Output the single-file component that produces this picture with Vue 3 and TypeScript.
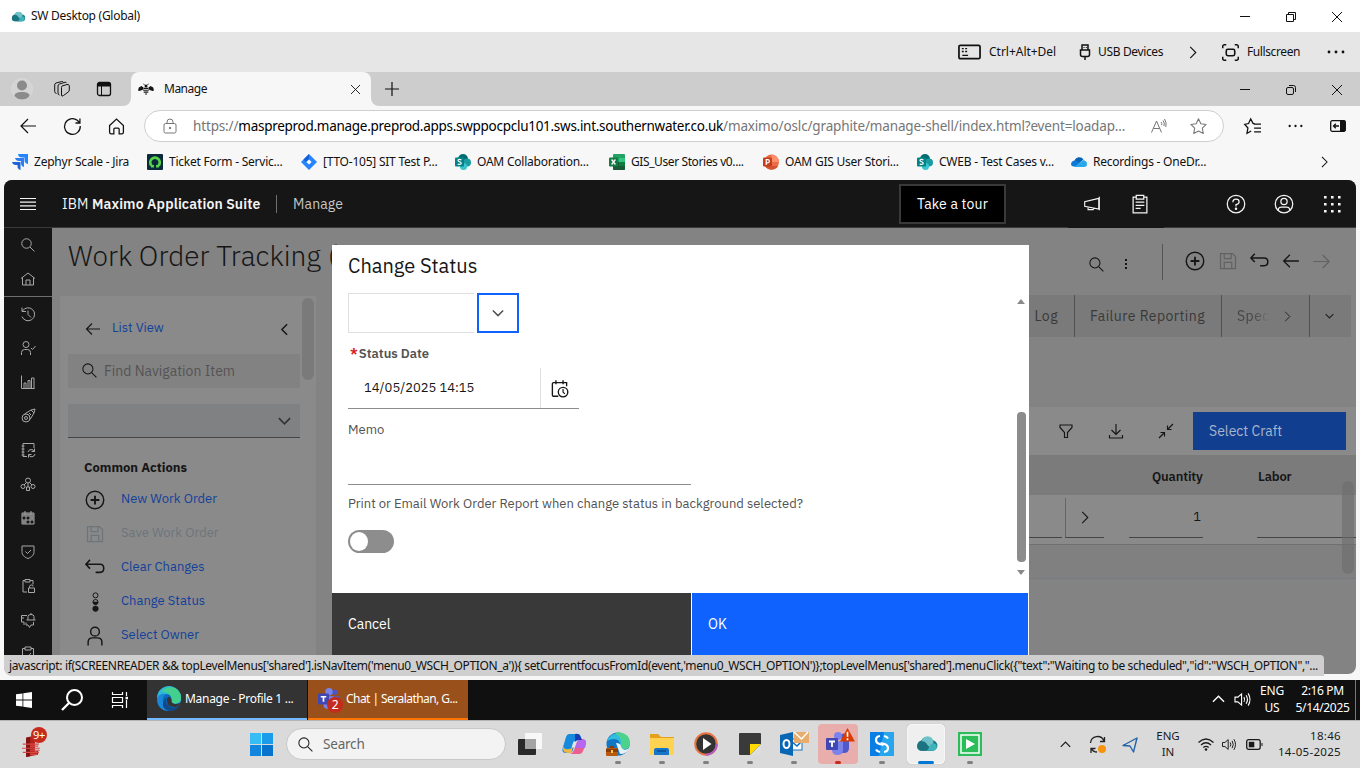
<script setup lang="ts">
import { h } from 'vue'

const art: Record<string, [string, string]> = {
  cloud: ['0 0 20 16', '<path d="M6 15a5 5 0 0 1-1-9.8A6 6 0 0 1 15.8 5 5 5 0 0 1 15 15z" fill="#1c7c86"/><circle cx="11" cy="6.500" r="5.500" fill="#6fc3c8"/><path d="M1 11a5 5 0 0 1 9-3c1.500 3 4 4.500 8 4.500-1 2-2.500 2.500-4 2.500H5a4 4 0 0 1-4-4" fill="#1c7480"/><path d="M12 12.500c1-4 5-6 7.500-3 1 3-1 5.500-4 5.500H8c2 0 3.500-1 4-2.500" fill="#3cb4ba"/>'],
  minus: ['0 0 10 10', '<path d="M0 4.500h10"/>'],
  restore: ['0 0 10 10', '<path d="M.5 2.500h7v7h-7zM2.500 2.500v-2h7v7h-2"/>'],
  restoreRound: ['0 0 10 10', '<rect x=".5" y="2.500" width="7" height="7" rx="1.500"/><path d="M3 .5h4.500a2 2 0 0 1 2 2V7"/>'],
  close: ['0 0 10 10', '<path d="M0 0l10 10M10 0L0 10"/>'],
  plus: ['0 0 14 14', '<path d="M7 0v14M0 7h14" stroke-width="1.200"/>'],
  keyboard: ['0 0 24 16', '<rect x="1" y="1" width="22" height="14" rx="1.500" stroke-width="1.800"/><path d="M4 4.500h2M7.500 4.500h2M4 7.500h2M7.500 7.500h2M4.500 11.500h6" stroke-width="1.500"/>'],
  usb: ['0 0 12 16', '<path d="M3 6V1h6v5M1.500 6h9v4.500a2 2 0 0 1-2 2h-5a2 2 0 0 1-2-2zM6 12.500V16" stroke-width="1.500"/><path d="M4.500 3.500h1M6.800 3.500h1"/>'],
  fullscreen: ['0 0 16 16', '<path d="M.7 4V2.200A1.500 1.500 0 0 1 2.200.7H4M12 .7h1.800a1.500 1.500 0 0 1 1.500 1.500V4M15.300 12v1.800a1.500 1.500 0 0 1-1.500 1.500H12M4 15.300H2.200a1.500 1.500 0 0 1-1.500-1.500V12" stroke-width="1.400"/><rect x="4" y="5" width="8" height="6" rx="1.500" stroke-width="1.500"/>'],
  right: ['0 0 8 14', '<path d="M1 1l6 6-6 6" stroke-width="1.200"/>'],
  left: ['0 0 8 14', '<path d="M7 1L1 7l6 6" stroke-width="1.700"/>'],
  down: ['0 0 14 8', '<path d="M1 1l6 6 6-6" stroke-width="1.800"/>'],
  up: ['0 0 14 8', '<path d="M1 7l6-6 6 6" stroke-width="1.500"/>'],
  dots: ['0 0 18 4', '<g fill="currentColor" stroke="none"><circle cx="2" cy="2" r="1.400"/><circle cx="9" cy="2" r="1.400"/><circle cx="16" cy="2" r="1.400"/></g>'],
  person: ['0 0 22 22', '<circle cx="11" cy="11" r="10.500" fill="#d4d4d4" stroke="#dedede" stroke-width=".6"/><g fill="#8b8b8b" stroke="none"><circle cx="11" cy="7.500" r="5"/><path d="M3.500 18c0-3 3-4 7.500-4s7.500 1 7.500 4c-2 2.500-4.500 3.500-7.500 3.500S5.500 20.500 3.500 18"/></g>'],
  workspaces: ['0 0 16 16', '<path d="M8 5l5-1.500q2-.5 2.300 1.300V9q0 1.500-1.300 2.200L9.500 14.500Q7.500 16 7.500 14V6.500q0-1 .5-1.500zM5.500 14Q4 14 4 12V5q0-1.500 1.500-2L11 1.300q1-.3 1.500.4M2.500 12.500Q.7 12 .7 10.500V4q0-1.500 1.300-2L7.500.6Q9 .3 9.300 1"/>'],
  tabActions: ['0 0 16 16', '<rect x="1.500" y="1.500" width="13" height="13" rx="2" stroke-width="1.300"/><path d="M2 2h12v3H2z" fill="currentColor"/><path d="M5.500 5v9"/>'],
  bee: ['0 0 16 12', '<g fill="#161616" stroke="none"><path d="M5.500 4.500L3.500 3 .8 4.500 0 7.500l1.500.5 4-1.500zM10.500 4.500l2-1.500 2.700 1.500.8 3-1.500.5-4-1.500z"/><path d="M5.700 4.800h4.600v1.100H5.700zM5.200 6.700h5.600v1.100H5.200zM5.700 8.600h4.600v1.100H5.700zM7 10.500h2v1H7z"/><circle cx="8" cy="3" r="1.500"/></g><path d="M6.500 2L5.500.7M9.500 2l1-1.300" stroke="#161616" stroke-width=".8"/>'],
  back: ['0 0 16 16', '<path d="M16 8H.8M8 1L1 8l7 7" stroke-width="1.200"/>'],
  refresh: ['0 0 16 16', '<path d="M15.300 7.500A7.400 7.400 0 1 1 12.500 2.200L15 4.700M15 .5v4.200h-4.200" stroke-width="1.200"/>'],
  home: ['0 0 16 16', '<path d="M1.500 7L8 1l6.500 6v6.500q0 1.500-1.500 1.500h-2.500v-4.500q0-1-1-1h-3q-1 0-1 1V15H3q-1.500 0-1.500-1.500z" stroke-width="1.200"/>'],
  lock: ['0 0 14 16', '<rect x="1" y="5.500" width="12" height="9.500" rx="1.500"/><path d="M4 5.500V4a3 3 0 0 1 6 0v1.500"/><circle cx="7" cy="10" r=".8" fill="currentColor"/>'],
  readAloud: ['0 0 16 16', '<path d="M.5 14.500L5.500 3l5 11.500M2.300 10.500h6.500M10 4q1.200 1.500.7 3.200M12 2.500q2 2.500 1 5.500M13.500 1q2.500 3.500 1.300 8"/>'],
  star: ['0 0 16 16', '<path d="M8 .8l2.200 4.600 5 .7-3.600 3.500.9 5L8 12.200l-4.500 2.400.9-5L.8 6.100l5-.7z" stroke-linejoin="round"/>'],
  favourites: ['0 0 16 16', '<path d="M10 5.300L8.500 5 6.300.8 4.300 5.200.7 6l3 3.400-.9 5 4-2.200M9 5.800h7M9.500 9.500H16M9.500 13H16" stroke-width="1.200"/>'],
  panel: ['0 0 16 12', '<rect x=".7" y=".7" width="14.600" height="10.600" rx="1.500" stroke-width="1.300"/><path d="M10.500 1h4.500v10h-4.500z" fill="currentColor"/><path d="M9 6H3.500m2.300-2.300L3.500 6l2.300 2.300" stroke-width="1.300"/>'],
  jiraScale: ['0 0 16 16', '<path d="M6 0h10v10a4 4 0 0 1-3.500-4V3.500H10A4 4 0 0 1 6 0" fill="#2684ff"/><path d="M3 4h9v9a4 4 0 0 1-3-4V7H7a4 4 0 0 1-4-3" fill="#2f7df0"/><path d="M0 8h8.500v8a4 4 0 0 1-3-4v-1H4a4 4 0 0 1-4-3" fill="#1b63d6"/>'],
  ticket: ['0 0 16 16', '<rect width="16" height="16" rx="1" fill="#0a2a3c"/><path d="M4.500 11.500a4.700 4.700 0 1 1 7 0" stroke="#55d34a" stroke-width="2.800"/><path d="M4 11h3v2.500H4zM9 11h3v2.500H9z" fill="#55d34a"/>'],
  jira: ['0 0 16 16', '<path d="M8 0l8 8-8 8-8-8z" fill="#2684ff"/><path d="M8 0v5L5 8 2.500 5.500z" fill="#1260d8"/><path d="M8 5.400L10.600 8 8 10.600 5.400 8z" fill="#fff"/>'],
  sharepoint: ['0 0 16 16', '<circle cx="8" cy="5" r="5" fill="#036c70"/><circle cx="12" cy="8.500" r="4" fill="#1a9ba1"/><circle cx="8.500" cy="12.500" r="3.500" fill="#37c6d0"/><rect y="3.500" width="9" height="9" rx="1" fill="#038387"/><path d="M6.400 5.800Q3 4.800 3 6.600c0 1.500 3.200.9 3.200 2.600 0 1.600-2.500 1.300-3.500.7" stroke="#fff" stroke-width="1.200"/>'],
  excel: ['0 0 16 16', '<rect x="4" width="12" height="16" rx="1" fill="#21a366"/><path d="M4 12h12v3a1 1 0 0 1-1 1H5a1 1 0 0 1-1-1z" fill="#185c37"/><path d="M4 8h6v4H4z" fill="#185c37"/><path d="M10 4h6v4h-6z" fill="#33c481"/><path d="M10 8h6v4h-6z" fill="#107c41"/><rect y="3.500" width="9" height="9" rx="1" fill="#107c41"/><path d="M2.600 5.500l3.800 5M6.400 5.500l-3.800 5" stroke="#fff" stroke-width="1.300"/>'],
  powerpoint: ['0 0 16 16', '<circle cx="8.500" cy="8" r="7.500" fill="#ed6c47"/><path d="M8.500.5A7.500 7.500 0 0 1 16 8H8.500z" fill="#ff8f6b"/><path d="M2 12h13a7.500 7.500 0 0 1-13 0" fill="#d35230"/><rect y="3.500" width="9" height="9" rx="1" fill="#c43e1c"/><path d="M3.200 11V5.700h1.600q1.600 0 1.600 1.500T4.800 8.800H3.500" stroke="#fff" stroke-width="1.200"/>'],
  onedrive: ['0 0 16 11', '<path d="M3.500 4.500A5 5 0 0 1 12.500 3l-6 5z" fill="#0364b8"/><path d="M0 7.500Q.5 4 4 4q2 0 3.500 1.500L10 10H3Q.2 10 0 7.500" fill="#0f78d4"/><path d="M3 10.500L12.500 3.500Q16 4.500 16 7.500t-3 3z" fill="#28a8ea"/>'],
  menu: ['0 0 16 12', '<path d="M0 .5h16M0 4.200h16M0 7.800h16M0 11.500h16" stroke-width="1.200"/>'],
  cSearch: ['0 0 32 32', '<circle cx="13" cy="13" r="9.500"/><path d="M20 20l9 9"/>'],
  cHome: ['0 0 32 32', '<path d="M2 15L16 4l14 11M5 13v15h22V13M12 28V18h8v10"/>'],
  history: ['0 0 32 32', '<path d="M5 10a13 13 0 1 1-1 11M4 3v8h8M16 9v8l6 6"/>'],
  userCheck: ['0 0 32 32', '<circle cx="12" cy="9" r="6"/><path d="M3 30v-5q0-6 6-6h6q6 0 6 6v5M22 16l3 3 6-7"/>'],
  chart: ['0 0 32 32', '<path d="M3 3v26h26M8 29V18h4v11M16 29V13h4v16M23 29V8h5v21"/>'],
  rocket: ['0 0 32 32', '<circle cx="12" cy="20" r="8"/><circle cx="12" cy="20" r="3"/><path d="M9 12L22 4l8-2-2 8-8 13M22 4l6 6M18 10l4 4"/>'],
  book: ['0 0 32 32', '<path d="M28 12V3H6v26h8M3 8h6M3 14h6M3 20h6M3 26h6M16 20a7 7 0 0 1 13-1M29 13v6h-6M30 24a7 7 0 0 1-13 2M17 31v-6h6"/>'],
  nodes: ['0 0 32 32', '<circle cx="16" cy="9" r="5"/><circle cx="6" cy="21" r="4"/><circle cx="26" cy="21" r="4"/><path d="M13 22h6v7h-6zM16 14v8M13 13l-5 5M19 13l5 5"/>'],
  calendar: ['0 0 32 32', '<path d="M4 6h24v22H4zM4 12h24M10 2v7M22 2v7M4 20h24M12 12v16M20 12v16"/><path d="M21 13h6v6h-6zM5 21h6v6H5zM5 7h22v4H5z" fill="currentColor" stroke="none" opacity=".8"/>'],
  shield: ['0 0 32 32', '<path d="M4 4h24v11c0 7-4 11-12 14C8 26 4 22 4 15zM11 15l4 4 7-7"/>'],
  clipLock: ['0 0 32 32', '<path d="M14 28H6V5h4M20 5h6v8M10 3h10v5H10zM17 20h12v9H17zM19 20v-3q0-3 4-3 3 0 3 3"/>'],
  chat: ['0 0 32 32', '<path d="M14 7H3v13h5v6M3 12h5M16 16V9q0-4 6-4t6 4v7M13 16h18M12 21v5h4l3 5 3-5h5v-6M22 2v3"/>'],
  clipCheck: ['0 0 32 32', '<path d="M10 5H5v24h22V5h-5M10 2h12v6H10zM11 18l4 4 7-8"/>'],
  bullhorn: ['0 0 32 32', '<path d="M28 6L3 12v8l25 5zM9 21v5h9l2-3M29 3v24"/>'],
  clipboard: ['0 0 32 32', '<path d="M10 5H5v25h22V5h-5M10 2h12v6H10zM9 13h14M9 18h14M9 23h8"/>'],
  help: ['0 0 32 32', '<circle cx="16" cy="16" r="14"/><path d="M11 13q0-5 5-5t5 4.500Q21 16 16 17v3"/><circle cx="16" cy="23.500" r="1" fill="currentColor"/>'],
  account: ['0 0 32 32', '<circle cx="16" cy="16" r="14"/><circle cx="16" cy="12" r="5"/><path d="M7 26v-2q1-3 5-3h8q4 0 5 3v2"/>'],
  apps: ['0 0 18 18', '<g fill="currentColor" stroke="none"><path d="M1 1h2.600v2.600H1zM8 1h2.600v2.600H8zM15 1h2.600v2.600H15zM1 8h2.600v2.600H1zM8 8h2.600v2.600H8zM15 8h2.600v2.600H15zM1 15h2.600v2.600H1zM8 15h2.600v2.600H8zM15 15h2.600v2.600H15z"/></g>'],
  kebab: ['0 0 4 14', '<path d="M1 2h2v2H1zM1 6h2v2H1zM1 10h2v2H1z" fill="currentColor" stroke="none"/>'],
  add: ['0 0 32 32', '<circle cx="16" cy="16" r="14" stroke-width="2.300"/><path d="M16 9v14M9 16h14" stroke-width="3"/>'],
  save: ['0 0 32 32', '<path d="M4 4h19l5 5v19H4zM10 4v8h11V4M10 28V18h12v10"/>'],
  undo: ['0 0 32 32', '<path d="M1 10h23q6 0 6 6.500T24 23h-7M8 3l-6.500 7L8 17" stroke-width="2.500"/>'],
  cBack: ['0 0 32 32', '<path d="M30 16H3M14 5L3 16l11 11" stroke-width="2.300"/>'],
  cForward: ['0 0 32 32', '<path d="M2 16h27M18 5l11 11-11 11"/>'],
  status: ['0 0 12 36', '<g stroke-width="1.800"><circle cx="6" cy="6" r="4.500"/><circle cx="6" cy="18" r="4.500"/></g><path d="M1.500 18h9a4.500 4.500 0 0 1-9 0" fill="currentColor"/><circle cx="6" cy="30" r="5" fill="currentColor"/>'],
  owner: ['0 0 32 32', '<g stroke-width="2.300"><circle cx="16" cy="9" r="7"/><path d="M5 31v-5q0-7 7-7h8q7 0 7 7v5"/></g>'],
  dateTime: ['0 0 32 32', '<path d="M14 29H6q-2 0-2-2V8q0-2 2-2h22v6M10 2v7M22 2v7" stroke-width="2.300"/><circle cx="22" cy="22" r="8" stroke-width="2.300"/><path d="M22 17v5l3 3"/>'],
  filter: ['0 0 32 32', '<path d="M4 4h24v5l-9 10v10h-6V19L4 9z" stroke-width="2.300"/>'],
  download: ['0 0 32 32', '<path d="M16 2v21M7 14l9 9 9-9M3 24v6h26v-6" stroke-width="2.300"/>'],
  collapse: ['0 0 32 32', '<path d="M30 2L19 13M19 5v8h8M2 30l11-11M5 19h8v8" stroke-width="2.300"/>'],
  winWhite: ['0 0 16 16', '<path d="M0 2.300L6.500 1.400v6.200H0zM7.300 1.300L16 0v7.600H7.300zM0 8.400h6.500v6.200L0 13.700zM7.300 8.400H16V16l-8.700-1.300z" fill="#fff" stroke="none"/>'],
  bigSearch: ['0 0 22 22', '<circle cx="13.500" cy="8.500" r="7.500" stroke-width="2"/><path d="M8 14l-7 7" stroke-width="2.300"/>'],
  taskView: ['0 0 16 16', '<path d="M.5 0v2.500h10V0M.5 16v-2.500h10V16M.5 5.500h10v5H.500zM14.500 0v4M14.500 8v8" stroke-width="1.200"/><rect x="13.500" y="4.800" width="2.500" height="2.500" fill="currentColor" stroke="none"/>'],
  edge: ['0 0 24 24', '<circle cx="12" cy="12" r="12" fill="#0c69b8"/><path d="M0 11A12 12 0 0 1 24 11q1 5.500-5 6-5 0-4-3 1-7-6-7-5 0-9 4" fill="#2fb9d9"/><path d="M13 0Q24 1 24 11q0 5-6 5.500-4 0-3-3Q14 5 5 4.500 8 .5 13 0" fill="#43cf8e"/><path d="M0 11q3-5 9-4-4 3-3 8 1 7 7 9Q0 24 0 11" fill="#1a87d9"/><path d="M10 11q-3 6 4 9 4 1.500 8-1-3 5-10 5-7-2-6-8 1-4 4-5" fill="#104a8b"/><path d="M11 10q3 0 3 3t4 4q3 0 5-1.500-1 5-6 4.500-8-1-7-8z" fill="#343434"/>'],
  edgeWork: ['0 0 24 24', '<circle cx="12" cy="12" r="11.500" fill="#1276c4"/><path d="M1 9A12 12 0 0 1 24 11q0 6-6 6-5 0-4-4 0-6-6-6-4 0-7 2" fill="#32bce0"/><path d="M14 .5Q24 2 24 11q0 6-6 6-3 0-3-3Q17 6 9 1q2-1 5-.5" fill="#4bd38b"/><path d="M10 11q5 0 5 4 3 5 8 1-2 6-9 6z" fill="#e7f1f5"/><rect y="16" width="12" height="8" rx="1" fill="#b65a0d"/><path d="M0 17h12v3H0zM4 14h4v2H4z" fill="#8a3c05"/><path d="M5 18h2v3H5z" fill="#ffc44c"/>'],
  teams: ['0 0 24 24', '<circle cx="18" cy="4.500" r="3" fill="#4b55c8"/><circle cx="12" cy="4" r="4" fill="#7b83eb"/><path d="M14 9h9v7q0 5-5 5h-4z" fill="#5059c9"/><path d="M6 9h11v9q0 5-5.500 5T6 18z" fill="#7b83eb"/><rect y="6" width="12" height="12" rx="1" fill="#4148b4"/><path d="M3 9.500h6M6 9.500V15" stroke="#fff" stroke-width="1.800"/>'],
  speaker: ['0 0 18 16', '<path d="M1 5.500h3L8 2v12l-4-3.500H1zM10.500 5.500q1.500 2.500 0 5M12.800 3.500q3 4.500 0 9M15 1.500q4 6.500 0 13" stroke-width="1.200"/>'],
  library: ['0 0 26 30', '<path d="M5 6l11-3v20l4-1v5L5 30z" fill="#b3211e"/><path d="M5 6l5-1v24l-5 1z" fill="#7c1514"/><path d="M1 14h20M0 19h22M1 24h20M10 16.500h10M10 21.500h12M10 26.500h9" stroke="#d94a47" stroke-width="1.500"/>'],
  winBlue: ['0 0 23 23', '<path d="M0 0h11v11H0z" fill="#36bdf5"/><path d="M12 0h11v11H12z" fill="#1a9ceb"/><path d="M0 12h11v11H0z" fill="#1286df"/><path d="M12 12h11v11H12z" fill="#0873cd"/>'],
  desktops: ['0 0 24 22', '<rect x="0" y="6" width="18" height="16" rx="1" fill="#292929"/><rect x="7" y="0" width="17" height="16" rx="1" fill="#f8f8f8"/><path d="M7 6h11v10H7z" fill="#a2a5a4"/>'],
  copilot: ['0 0 24 22', '<path d="M7 1h9q2 0 2.500 2L20 7h-4q-2 0-3 3l-2 7q-1 3-4 3H4q-5 0-3-6L4 4q1-3 3-3" fill="#168bdd"/><path d="M1 13q1 4 6 3 3 0 4-4l-1 6q-1 3-4 2-6 0-5-7" fill="#f2b63c"/><path d="M17 21H8q3-1 4-4l3-8q1-3 4-3 6 0 5 5l-3 7q-1 3-4 3" fill="#ec5d91"/><path d="M13 15l2-6q1-3 4-3 6 0 5 5l-1 4z" fill="#b568ed"/><path d="M13 1q4-1 5 2l2 4h-4q-2 0-3 2z" fill="#173cb4"/><path d="M11.500 8.500h3l-2 6h-3z" fill="#e4e4e4"/>'],
  folder: ['0 0 24 22', '<path d="M0 1h8l3 3h13v17H0z" fill="#e4a11b"/><path d="M0 5h24v17H0z" fill="#ffd252"/><path d="M4 22v-5q0-2 2-2h11q2 0 2 2v5z" fill="#1475c9"/><path d="M7 18h9" stroke="#0c4d93" stroke-width="1.500"/>'],
  media: ['0 0 24 24', '<circle cx="12" cy="12" r="10.800" fill="#333" stroke="#e77543" stroke-width="2"/><path d="M12 22.800A10.800 10.800 0 0 0 22.800 12" stroke="#b65bc4" stroke-width="2"/><path d="M9 6l8.500 6L9 18z" fill="#fff"/>'],
  sticky: ['0 0 22 22', '<rect width="22" height="22" rx="1" fill="#3a3a3a"/><path d="M11 11h11L11 22z" fill="#ffd900"/><path d="M22 11v11H11z" fill="#ddd"/>'],
  outlook: ['0 0 28 24', '<rect x="11" y="7" width="11" height="11" fill="#fff" stroke="#0f72c6"/><path d="M11 9l6 5 5-5" stroke="#0f72c6" stroke-width="1.500"/><path d="M14 0h15v11H14z" fill="#e8ac6c"/><path d="M14 0l7.500 7L28 0" stroke="#fff" stroke-width="1.500"/><path d="M0 3l13-3v24L0 21z" fill="#0867b5"/><ellipse cx="6.500" cy="12" rx="3" ry="4" stroke="#fff" stroke-width="2"/>'],
  alert: ['0 0 16 15', '<path d="M8 0l8 14.500H0z" fill="#da3b01"/><path d="M8 4v5.500M8 11v2" stroke="#fff" stroke-width="1.800"/>'],
  stream: ['0 0 24 24', '<rect width="24" height="24" fill="#087ee4"/><path d="M14 0h10v24H9z" fill="#27a5ed"/><path d="M10 4Q6 4.500 6 8q0 3 3.500 4l4 1M10 20q-3-.5-4-2.500M14 4q3 .5 4 2.500M10.500 11l4 1Q18 13 18 16q0 3.500-4 4" stroke="#fff" stroke-width="2.200"/>'],
  camtasia: ['0 0 24 24', '<rect width="24" height="24" fill="#2abd5a"/><rect x="3" y="3" width="18" height="18" stroke="#fff" stroke-width="1.500"/><path d="M8 7l9 5-9 5z" fill="#fff"/>'],
  sync: ['0 0 18 18', '<path d="M1.500 7A7 7 0 0 1 15 5M15.500 1v4.500H11M8 16Q4 16 2.500 12.500M2 17v-4.500h4.500" stroke="#222" stroke-width="1.300"/><circle cx="13" cy="13" r="4" fill="#f7930c" stroke="none"/>'],
  locate: ['0 0 16 16', '<path d="M15 1L1 8.500l7 .5 3.500 6z" stroke="#2563a9" stroke-width="1.400" stroke-linejoin="round"/>'],
  wifi: ['0 0 16 13', '<path d="M.5 4.500q7.500-7 15 0M3 7q5-4.500 10 0M5.300 9.500q2.700-2.300 5.400 0" stroke-width="1.300"/><circle cx="8" cy="11.500" r="1.300" fill="currentColor" stroke="none"/>'],
  battery: ['0 0 17 11', '<rect x=".7" y=".7" width="13.500" height="9.600" rx="2" stroke-width="1.300"/><path d="M2.800 2.800h5.500v5.500H2.800z" fill="currentColor" stroke="none"/><path d="M16 4v3"/>'],
}

interface IconProps { name: string; w: number; hgt?: number }

// Line icons on a 32-unit grid need a heavier stroke to end up one pixel wide.
const Icon = (p: IconProps) => {
  const [viewBox, innerHTML] = art[p.name]
  const filled = innerHTML.includes('fill="#')
  return h('svg', {
    viewBox,
    width: p.w,
    height: p.hgt ?? p.w,
    fill: 'none',
    stroke: filled ? 'none' : 'currentColor',
    'stroke-width': viewBox.endsWith('32') ? 2 : 1,
    innerHTML,
  })
}
Icon.props = ['name', 'w', 'hgt']

const bookmarks = [
  { icon: 'jiraScale', label: 'Zephyr Scale - Jira' },
  { icon: 'ticket', label: 'Ticket Form - Servic...' },
  { icon: 'jira', label: '[TTO-105] SIT Test P...' },
  { icon: 'sharepoint', label: 'OAM Collaboration...' },
  { icon: 'excel', label: 'GIS_User Stories v0....' },
  { icon: 'powerpoint', label: 'OAM GIS User Stori...' },
  { icon: 'sharepoint', label: 'CWEB - Test Cases v...' },
  { icon: 'onedrive', label: 'Recordings - OneDr...' },
]
const railTop = ['cSearch', 'cHome']
const rail = ['history', 'userCheck', 'chart', 'rocket', 'book', 'nodes', 'calendar', 'shield', 'clipLock', 'chat', 'clipCheck']
const actions = [
  { icon: 'add', label: 'New Work Order', off: false },
  { icon: 'save', label: 'Save Work Order', off: true },
  { icon: 'undo', label: 'Clear Changes', off: false },
  { icon: 'status', label: 'Change Status', off: false },
  { icon: 'owner', label: 'Select Owner', off: false },
]
const dock = [
  { icon: 'desktops', w: 24, hgt: 22, state: '' },
  { icon: 'copilot', w: 24, hgt: 22, state: '' },
  { icon: 'edgeWork', w: 24, hgt: 24, state: 'run' },
  { icon: 'folder', w: 24, hgt: 22, state: 'run' },
  { icon: 'media', w: 24, hgt: 24, state: 'run' },
  { icon: 'sticky', w: 22, hgt: 22, state: 'run' },
  { icon: 'outlook', w: 28, hgt: 24, state: 'run' },
  { icon: 'teams', w: 24, hgt: 24, state: 'run alerting' },
  { icon: 'stream', w: 24, hgt: 24, state: 'run' },
  { icon: 'cloud', w: 21, hgt: 17, state: 'run current' },
  { icon: 'camtasia', w: 24, hgt: 24, state: 'run' },
]
const statusText = `javascript: if(SCREENREADER && topLevelMenus['shared'].isNavItem('menu0_WSCH_OPTION_a')){ setCurrentfocusFromId(event,'menu0_WSCH_OPTION')};topLevelMenus['shared'].menuClick({"text":"Waiting to be scheduled","id":"WSCH_OPTION","...`
</script>

<template>
  <div class="screen">
    <header class="titlebar">
      <Icon name="cloud" :w="14" :hgt="11" />
      <span class="win-title">SW Desktop (Global)</span>
      <div class="win-buttons">
        <span><Icon name="minus" :w="10" /></span>
        <span><Icon name="restore" :w="10" /></span>
        <span><Icon name="close" :w="10" /></span>
      </div>
    </header>

    <div class="remote-bar">
      <div class="remote-item keys"><Icon name="keyboard" :w="23" :hgt="16" /><span>Ctrl+Alt+Del</span></div>
      <div class="remote-item usb"><Icon name="usb" :w="12" :hgt="16" /><span>USB Devices</span></div>
      <div class="remote-item more"><Icon name="right" :w="8" :hgt="13" /></div>
      <div class="remote-item full"><Icon name="fullscreen" :w="17" :hgt="17" /><span>Fullscreen</span></div>
      <Icon name="dots" :w="20" :hgt="4" />
    </div>

    <div class="tabs">
      <div class="tabs-left">
        <span><Icon name="person" :w="22" /></span>
        <span><Icon name="workspaces" :w="16" /></span>
        <span class="wide"><Icon name="tabActions" :w="16" /></span>
      </div>
      <div class="tab-slot">
        <div class="tab">
          <Icon name="bee" :w="16" :hgt="12" />
          <span class="tab-name">Manage</span>
          <Icon name="close" :w="9" />
        </div>
      </div>
      <div class="tabs-right">
        <Icon name="plus" :w="14" />
        <div class="win-buttons">
          <span><Icon name="minus" :w="10" /></span>
          <span><Icon name="restoreRound" :w="10" /></span>
          <span><Icon name="close" :w="10" /></span>
        </div>
      </div>
    </div>

    <div class="address-row">
      <span class="nav-btn"><Icon name="back" :w="16" /></span>
      <span class="nav-btn"><Icon name="refresh" :w="17" /></span>
      <span class="nav-btn"><Icon name="home" :w="17" /></span>
      <div class="address">
        <Icon name="lock" :w="14" :hgt="16" />
        <span class="url">https://<b>maspreprod.manage.preprod.apps.swppocpclu101.sws.int.southernwater.co.uk</b>/maximo/oslc/graphite/manage-shell/index.html?event=loadap...</span>
        <Icon name="readAloud" :w="16" />
        <Icon class="fav" name="star" :w="17" />
      </div>
      <div class="address-tools">
        <Icon name="favourites" :w="17" />
        <Icon name="dots" :w="15" :hgt="4" />
        <Icon name="panel" :w="16" :hgt="12" />
      </div>
    </div>

    <nav class="bookmarks">
      <div v-for="(b, i) in bookmarks" :key="i" class="bookmark">
        <Icon :name="b.icon" :w="16" /><span>{{ b.label }}</span>
      </div>
      <Icon class="bm-more" name="right" :w="7" :hgt="12" />
    </nav>

    <main class="stage">
      <div class="app">
        <header class="app-bar">
          <Icon name="menu" :w="16" :hgt="12" />
          <span class="brand">IBM <b>Maximo Application Suite</b></span>
          <span class="product">Manage</span>
          <button class="tour">Take a tour</button>
          <div class="app-tools news"><span><Icon name="bullhorn" :w="18" /></span><span><Icon name="clipboard" :w="20" /></span></div>
          <div class="app-tools"><span><Icon name="help" :w="20" /></span><span><Icon name="account" :w="20" /></span><span class="apps"><Icon name="apps" :w="18" /></span></div>
        </header>
        <div class="body">
          <aside class="rail">
            <span v-for="n in railTop" :key="n"><Icon :name="n" :w="16" /></span>
            <hr />
            <span v-for="n in rail" :key="n"><Icon :name="n" :w="16" /></span>
          </aside>
          <section class="content">
            <div class="heading">
              <h1>Work Order Tracking (</h1>
              <div class="find"><Icon name="cSearch" :w="17" /><Icon name="kebab" :w="4" :hgt="14" /></div>
              <div class="record-tools">
                <Icon name="add" :w="20" /><Icon class="dim" name="save" :w="20" /><Icon name="undo" :w="19" /><Icon name="cBack" :w="18" /><Icon class="dim" name="cForward" :w="19" />
              </div>
            </div>
            <div class="columns">
              <div class="nav-panel">
                <div class="nav-main">
                  <div class="list-view"><Icon name="cBack" :w="16" /><a>List View</a><Icon name="left" :w="7" :hgt="13" /></div>
                  <div class="nav-find"><Icon name="cSearch" :w="17" /><span>Find Navigation Item</span></div>
                  <div class="nav-select"><Icon name="down" :w="13" :hgt="8" /></div>
                  <h2>Common Actions</h2>
                  <div v-for="a in actions" :key="a.label" class="action" :class="{ off: a.off }">
                    <span class="action-icon"><Icon :name="a.icon" :w="a.icon === 'status' ? 7 : 20" :hgt="20" /></span>
                    <a>{{ a.label }}</a>
                  </div>
                </div>
                <i class="thumb" />
              </div>
              <div class="record">
                <div class="record-tabs">
                  <span class="t-log">Log</span>
                  <span class="t-fail">Failure Reporting</span>
                  <span class="t-spec"><em>Spec</em><Icon name="right" :w="7" :hgt="11" /></span>
                  <span class="t-more"><Icon name="down" :w="9" :hgt="6" /></span>
                </div>
                <div class="table">
                  <div class="table-tools">
                    <Icon name="filter" :w="16" /><Icon name="download" :w="16" /><Icon name="collapse" :w="16" />
                    <button>Select Craft</button>
                  </div>
                  <div class="thead"><span class="qty">Quantity</span><span class="labor">Labor</span></div>
                  <div class="trow">
                    <i class="cell c1" /><span class="cell c2"><Icon name="right" :w="8" :hgt="13" /></span><span class="cell c3">1</span><i class="cell c4" />
                  </div>
                  <div class="tfoot" />
                  <i class="thumb" />
                </div>
              </div>
            </div>
          </section>
        </div>

        <section class="dialog">
          <h2>Change Status</h2>
          <div class="dialog-body">
            <div class="form">
              <div class="combo"><span class="combo-input" /><span class="combo-btn"><Icon name="down" :w="12" :hgt="8" /></span></div>
              <label class="required"><i>*</i>Status Date</label>
              <div class="date"><span>14/05/2025 14:15</span><span class="date-btn"><Icon name="dateTime" :w="19" /></span></div>
              <label>Memo</label>
              <div class="memo" />
              <label>Print or Email Work Order Report when change status in background selected?</label>
              <div class="toggle"><i /></div>
            </div>
            <div class="scroll"><i class="arrow-up" /><i class="bar" /><i class="arrow-down" /></div>
          </div>
          <footer><button class="cancel">Cancel</button><button class="ok">OK</button></footer>
        </section>
      </div>
      <div class="status-tip">{{ statusText }}</div>
    </main>

    <div class="taskbar">
      <div class="task-tools"><Icon name="winWhite" :w="16" /><Icon name="bigSearch" :w="22" /><Icon name="taskView" :w="16" /></div>
      <div class="task edge-task"><Icon name="edge" :w="24" /><span>Manage - Profile 1 ...</span></div>
      <div class="task teams-task"><span class="badged"><Icon name="teams" :w="22" /><b>2</b></span><span>Chat | Seralathan, G...</span></div>
      <div class="task-right">
        <Icon name="up" :w="13" :hgt="8" />
        <Icon name="speaker" :w="17" :hgt="15" />
        <div class="stack lang">ENG<br />US</div>
        <div class="stack clock">2:16 PM<br />5/14/2025</div>
      </div>
    </div>

    <div class="dock">
      <div class="widget"><Icon name="library" :w="21" :hgt="26" /><b>9+</b></div>
      <Icon class="start" name="winBlue" :w="23" />
      <div class="dock-search"><Icon name="cSearch" :w="17" /><span>Search</span></div>
      <div v-for="d in dock" :key="d.icon" class="dock-app" :class="d.state">
        <span class="dock-tile"><Icon :name="d.icon" :w="d.w" :hgt="d.hgt" /><Icon v-if="d.icon === 'teams'" class="warn" name="alert" :w="15" :hgt="14" /></span>
      </div>
      <div class="dock-right">
        <Icon class="d-up" name="up" :w="11" :hgt="7" />
        <Icon class="d-sync" name="sync" :w="18" />
        <Icon class="d-loc" name="locate" :w="16" />
        <div class="stack d-lang">ENG<br />IN</div>
        <Icon class="d-wifi" name="wifi" :w="16" :hgt="13" />
        <Icon class="d-vol" name="speaker" :w="16" :hgt="13" />
        <Icon class="d-bat" name="battery" :w="17" :hgt="11" />
        <div class="stack d-clock">18:46<br />14-05-2025</div>
      </div>
    </div>
  </div>
</template>

<style>
body { margin: 0; overflow: hidden; }
</style>

<style scoped>
.screen { width: 1360px; height: 768px; display: flex; flex-direction: column; background: #f7f7f7; color: #111; font: 12px/16px "Segoe UI", "Noto Sans", sans-serif; letter-spacing: -0.23px; overflow: hidden; white-space: nowrap; }
.screen * { box-sizing: border-box; }
svg { display: block; flex: none; overflow: visible; }
button { font: inherit; letter-spacing: inherit; text-align: left; border: 0; padding: 0; }
h1, h2 { margin: 0; }

.titlebar { height: 32px; background: #fff; display: flex; align-items: center; padding-left: 11px; flex: none; }
.win-title { margin-left: 6px; letter-spacing: -0.28px; }
.win-buttons { margin-left: auto; display: flex; }
.win-buttons span { width: 46px; display: flex; justify-content: center; padding-top: 1px; }

.remote-bar { height: 40px; background: #e6e6e6; display: flex; align-items: center; padding-left: 958px; flex: none; }
.remote-item { display: flex; align-items: center; }
.keys { width: 121px; gap: 8px; letter-spacing: -0.02px; }
.usb { width: 110px; gap: 7px; letter-spacing: -0.35px; }
.more { width: 33px; }
.full { width: 104px; gap: 8px; letter-spacing: -0.4px; }

.tabs { height: 34px; display: flex; flex: none; }
.tabs-left { width: 131px; background: #cdcdcd; border-bottom-right-radius: 8px; display: flex; align-items: center; padding-left: 2px; }
.tabs-left span { width: 40px; display: flex; justify-content: center; }
.tabs-left .wide { width: 44px; }
.tab-slot { width: 240px; background: linear-gradient(#cdcdcd 50%, #f7f7f7 50%); }
.tab { height: 100%; background: #f7f7f7; border-radius: 8px 8px 0 0; display: flex; align-items: center; padding: 0 11px 0 7px; }
.tab-name { margin-left: 10px; flex: 1; letter-spacing: -0.5px; }
.tabs-right { flex: 1; background: #cdcdcd; border-bottom-left-radius: 8px; display: flex; align-items: center; padding-left: 14px; }

.address-row { height: 40px; display: flex; align-items: center; padding-left: 6px; flex: none; }
.nav-btn { width: 44px; display: flex; justify-content: center; }
.address { width: 1080px; height: 32px; margin-left: 6px; background: #fff; border: 1px solid #cfcfcf; border-radius: 16px; display: flex; align-items: center; padding-left: 18px; color: #767676; }
.url { width: 940px; margin-left: 16px; margin-right: 18px; font-size: 13.5px; letter-spacing: -0.15px; }
.url b { font-weight: 400; color: #000; letter-spacing: -0.28px; }
.fav { margin-left: 23px; }
.address-tools { display: flex; align-items: center; margin-left: 20px; gap: 27px; }

.bookmarks { height: 31px; display: flex; align-items: center; padding-left: 12px; flex: none; }
.bookmark { width: 154px; display: flex; align-items: center; gap: 6px; }
.bookmark:first-child { width: 135px; }
.bookmark:nth-child(5) { letter-spacing: -0.4px; }
.bm-more { margin-left: 96px; }

.stage { height: 503px; padding: 3px 4px 0; position: relative; flex: none; }
.app { height: 494px; border-radius: 8px; overflow: hidden; position: relative; background: #838383; display: flex; flex-direction: column; font: 14px/18px "IBM Plex Sans", "Open Sans", sans-serif; letter-spacing: 0; }
.app-bar { height: 48px; flex: none; background: #161616; border-bottom: 1px solid #393939; color: #f4f4f4; display: flex; align-items: center; padding-left: 16px; }
.brand { margin-left: 26px; width: 215px; height: 18px; border-right: 1px solid #6f6f6f; letter-spacing: 0.12px; }
.brand b { font-weight: 600; }
.product { margin-left: 16px; width: 606px; color: #c6c6c6; letter-spacing: 0.15px; }
.tour { width: 107px; height: 40px; background: #000; border: 2px solid #393939; color: #fff; padding-left: 16px; letter-spacing: 0.16px; }
.app-tools { display: flex; height: 48px; margin-left: 48px; }
.app-tools.news { margin-left: 62px; background: #161616; position: relative; }
.app-tools span { width: 48px; display: flex; align-items: center; justify-content: center; }
.app-tools .apps { padding-right: 1px; }

.body { flex: 1; display: flex; min-height: 0; }
.rail { width: 48px; background: #161616; color: #a8a8a8; flex: none; overflow: hidden; }
.rail span { height: 34px; display: flex; align-items: center; justify-content: center; }
.rail hr { margin: 0; border: 0; height: 1px; background: #6f6f6f; }
.content { flex: 1; color: #161616; }
.heading { height: 68px; display: flex; padding-left: 16px; }
h1 { font-size: 28px; line-height: 36px; font-weight: 300; width: 1020px; margin-top: 10px; letter-spacing: 0; }
.find { display: flex; align-items: center; gap: 19px; height: 36px; width: 75px; margin-top: 18px; }
.record-tools { border-left: 1px solid #555; height: 36px; margin-top: 16px; padding: 0 0 2px 22px; display: flex; align-items: center; gap: 12.6px; margin-left: -1px; }
.dim { color: #626262; }
.columns { display: flex; padding-left: 8px; }
.nav-panel { width: 256px; height: 380px; background: #8a8a8a; display: flex; padding-left: 8px; }
.nav-main { width: 232px; }
.thumb { width: 12px; border-radius: 6px; background: #7a7a7a; }
.nav-panel .thumb { height: 82px; margin: 2px 0 0 2px; }
.list-view { height: 58px; padding: 8px 12px 0 17px; display: flex; align-items: center; }
.list-view a { margin: -2px auto 0 11px; font-size: 13px; }
a { color: #12419a; }
.nav-find { height: 34px; background: #828282; display: flex; align-items: center; gap: 6px; padding: 0 0 1px 13px; color: #161616; }
.nav-find span { color: #545454; }
.nav-select { height: 34px; margin-top: 16px; background: #808182; border-bottom: 1px solid #454545; color: #333; display: flex; align-items: center; justify-content: flex-end; padding-right: 9px; }
.nav-main h2 { font-size: 13px; line-height: 18px; font-weight: 700; margin: 21px 0 5px 16px; }
.action { height: 34px; display: flex; align-items: center; padding-left: 16px; font-size: 13px; }
.action-icon { width: 22px; display: flex; justify-content: center; padding-top: 2px; }
.action a { margin-left: 15px; }
.off, .off a { color: #6d757b; }

.record { margin-left: 16px; width: 1024px; }
.record-tabs { height: 42px; margin-top: -1px; width: 1019px; padding-left: 650px; background: #7a7a7a; display: flex; color: #393939; letter-spacing: 0.45px; }
.record-tabs span { display: flex; align-items: center; border-right: 1px solid #505050; padding-left: 15px; }
.t-log { width: 93px; justify-content: flex-end; padding-right: 16px; }
.t-fail { width: 147px; }
.t-spec { width: 88px; color: #222; }
.t-spec em { font-style: normal; width: 47px; background: linear-gradient(90deg, #444 35%, #7a7a7a 68%); -webkit-background-clip: text; background-clip: text; color: transparent; }
.record-tabs .t-more { width: 41px; border: 0; color: #222; }
.table { margin-top: 70px; position: relative; }
.table-tools { height: 48px; background: #8a8a8a; display: flex; align-items: center; padding-left: 726px; gap: 34px; }
.table-tools button { width: 153px; height: 38px; margin-left: -15px; background: #123e8f; color: #a8b4cc; padding-left: 16px; padding-bottom: 1px; }
.thead { height: 40px; background: #7b7b7b; display: flex; align-items: center; font-size: 13px; font-weight: 600; padding-top: 3px; letter-spacing: -0.15px; }
.thead .qty { margin-left: 820px; width: 106px; }
.trow { height: 50px; background: #8a8a8a; border-bottom: 1px solid #707070; display: flex; padding-top: 3px; }
.cell { height: 40px; border-bottom: 1px solid #454545; }
.c1 { width: 730px; }
.c2 { width: 39px; margin-left: 3px; border-left: 1px solid #666; display: flex; align-items: center; justify-content: center; }
.c3 { width: 74px; margin-left: 25px; text-align: right; line-height: 38px; padding-right: 2px; font-size: 13px; }
.c4 { width: 99px; margin-left: 54px; }
.tfoot { height: 34px; background: #808080; border-bottom: 1px solid #777b82; }
.table .thumb { position: absolute; right: 2px; top: 74px; height: 93px; background: rgba(108, 108, 108, .6); }

.dialog { position: absolute; left: 328px; top: 65px; width: 697px; height: 420px; background: #fff; color: #161616; }
.dialog h2 { font-size: 20px; line-height: 26px; font-weight: 400; padding: 8px 16px 0; height: 48px; }
.dialog-body { height: 300px; display: flex; padding-left: 16px; }
.form { flex: 1; font-size: 13px; }
.combo { display: flex; gap: 3px; }
.combo-input { width: 126px; height: 40px; border: 1px solid #e0e0e0; border-right: 0; }
.combo-btn { width: 42px; height: 40px; border: 2px solid #0f62fe; display: flex; align-items: center; justify-content: center; color: #525252; }
label { display: block; line-height: 18px; color: #525252; }
.required { font-weight: 600; margin-top: 12px; padding-left: 2px; }
.required i { color: #da1e28; font-style: normal; font-weight: 700; letter-spacing: 1px; }
.date { margin-top: 5px; width: 231px; height: 41px; border-bottom: 1px solid #8d8d8d; display: flex; align-items: center; justify-content: space-between; padding-left: 16px; margin-bottom: 12px; }
.date-btn { width: 39px; height: 40px; border-left: 1px solid #e0e0e0; display: flex; align-items: center; justify-content: center; padding-right: 1px; }
.memo { width: 343px; height: 46px; border-bottom: 1px solid #8d8d8d; margin-bottom: 10px; }
.toggle { width: 46px; height: 23px; border-radius: 12px; background: #8d8d8d; margin-top: 17px; padding: 2px; }
.toggle i { display: block; width: 18px; height: 19px; border-radius: 50%; background: #fff; }
.scroll { width: 15px; margin-right: 1px; display: flex; flex-direction: column; align-items: center; }
.arrow-up, .arrow-down { border: 4px solid transparent; }
.arrow-up { border-top: 0; border-bottom: 5px solid #8a8a8a; margin-top: 6px; }
.arrow-down { border-bottom: 0; border-top: 5px solid #8a8a8a; margin-top: 8px; }
.bar { width: 9px; height: 150px; border-radius: 4px; background: #8c8c8c; margin-top: 108px; margin-left: 1px; }
.dialog footer { display: flex; height: 64px; padding-right: 1px; gap: 1px; color: #fff; }
.dialog footer button { height: 62px; padding-left: 16px; color: #fff; }
.cancel { width: 359px; background: #393939; }
.ok { width: 336px; background: #0f62fe; }

.status-tip { position: absolute; left: 4px; top: 478px; width: 1320px; height: 21px; line-height: 21px; background: #cfcfcf; border-radius: 0 4px 0 8px; padding-left: 5px; color: #111; letter-spacing: -0.36px; }

.taskbar { height: 40px; background: #101010; display: flex; color: #fff; flex: none; }
.task-tools { width: 147px; display: flex; align-items: center; gap: 29px; padding-left: 16px; }
.task { width: 160px; display: flex; align-items: center; gap: 4px; padding-left: 10px; margin-right: 1px; border-bottom: 2px solid #76b9ff; background: #333; }
.edge-task { letter-spacing: -0.3px; }
.teams-task { background: #9a501a; border-color: #ff7300; gap: 6px; letter-spacing: -0.55px; }
.badged { position: relative; }
.badged b { position: absolute; left: 9px; top: 9px; width: 16px; height: 16px; border-radius: 50%; background: #c42b1c; font-weight: 400; text-align: center; }
.task-right { margin-left: auto; display: flex; align-items: center; width: 148px; border-right: 1px solid #777; margin-right: 4px; padding: 0 0 2px 4px; }
.task-right svg:nth-child(2) { margin-left: 9px; }
.stack { line-height: 17px; text-align: center; }
.lang { width: 42px; }
.clock { width: 59px; letter-spacing: -0.35px; }

.dock { height: 48px; background: #dadada; border-top: 1px solid #b5b5b5; display: flex; align-items: center; color: #1a1a1a; flex: none; }
.widget { position: relative; margin-left: 22px; width: 26px; height: 30px; padding-top: 2px; }
.widget b { position: absolute; left: 9px; top: -3px; width: 16px; height: 16px; border-radius: 50%; background: #c42b1c; color: #fff; font-size: 11px; font-weight: 400; text-align: center; line-height: 16px; }
.start { margin-left: 202px; }
.dock-search { margin: -1px 2px 0 13px; width: 220px; height: 32px; border-radius: 16px; background: #f3f3f3; border: 1px solid #c8c8c8; display: flex; align-items: center; gap: 9px; padding-left: 10px; font-size: 13.5px; letter-spacing: -.2px; color: #222; }
.dock-search span { color: #666; }
.dock-app { width: 44px; height: 44px; display: flex; justify-content: center; position: relative; }
.dock-tile { width: 40px; height: 40px; margin-top: 1px; display: flex; align-items: center; justify-content: center; border-radius: 4px; position: relative; }
.run::after { content: ""; position: absolute; left: 19px; bottom: 3px; width: 6px; height: 3px; border-radius: 2px; background: #808080; }
.alerting .dock-tile { background: #e9aeab; }
.alerting::after { background: #c42b1c; }
.current .dock-tile { background: #efefef; border: 1px solid #f7f7f7; width: 38px; box-shadow: 0 0 1px #aaa; }
.current::after { left: 14px; width: 16px; background: #0078d4; }
.warn { position: absolute; right: 3px; top: 4px; }
.dock-right { margin-left: 68px; display: flex; align-items: center; font-size: 11.5px; }
.dock-right .stack { line-height: 16px; letter-spacing: 0; padding-bottom: 1px; }
.d-sync { margin-left: 18px; }
.d-loc { margin-left: 15px; }
.dock-right .d-lang { width: 40px; margin-left: 10px; }
.d-wifi { margin-left: 10px; }
.d-vol { margin-left: 7px; }
.d-bat { margin-left: 9px; }
.dock-right .d-clock { text-align: right; width: 78px; letter-spacing: 0.3px; }
</style>
